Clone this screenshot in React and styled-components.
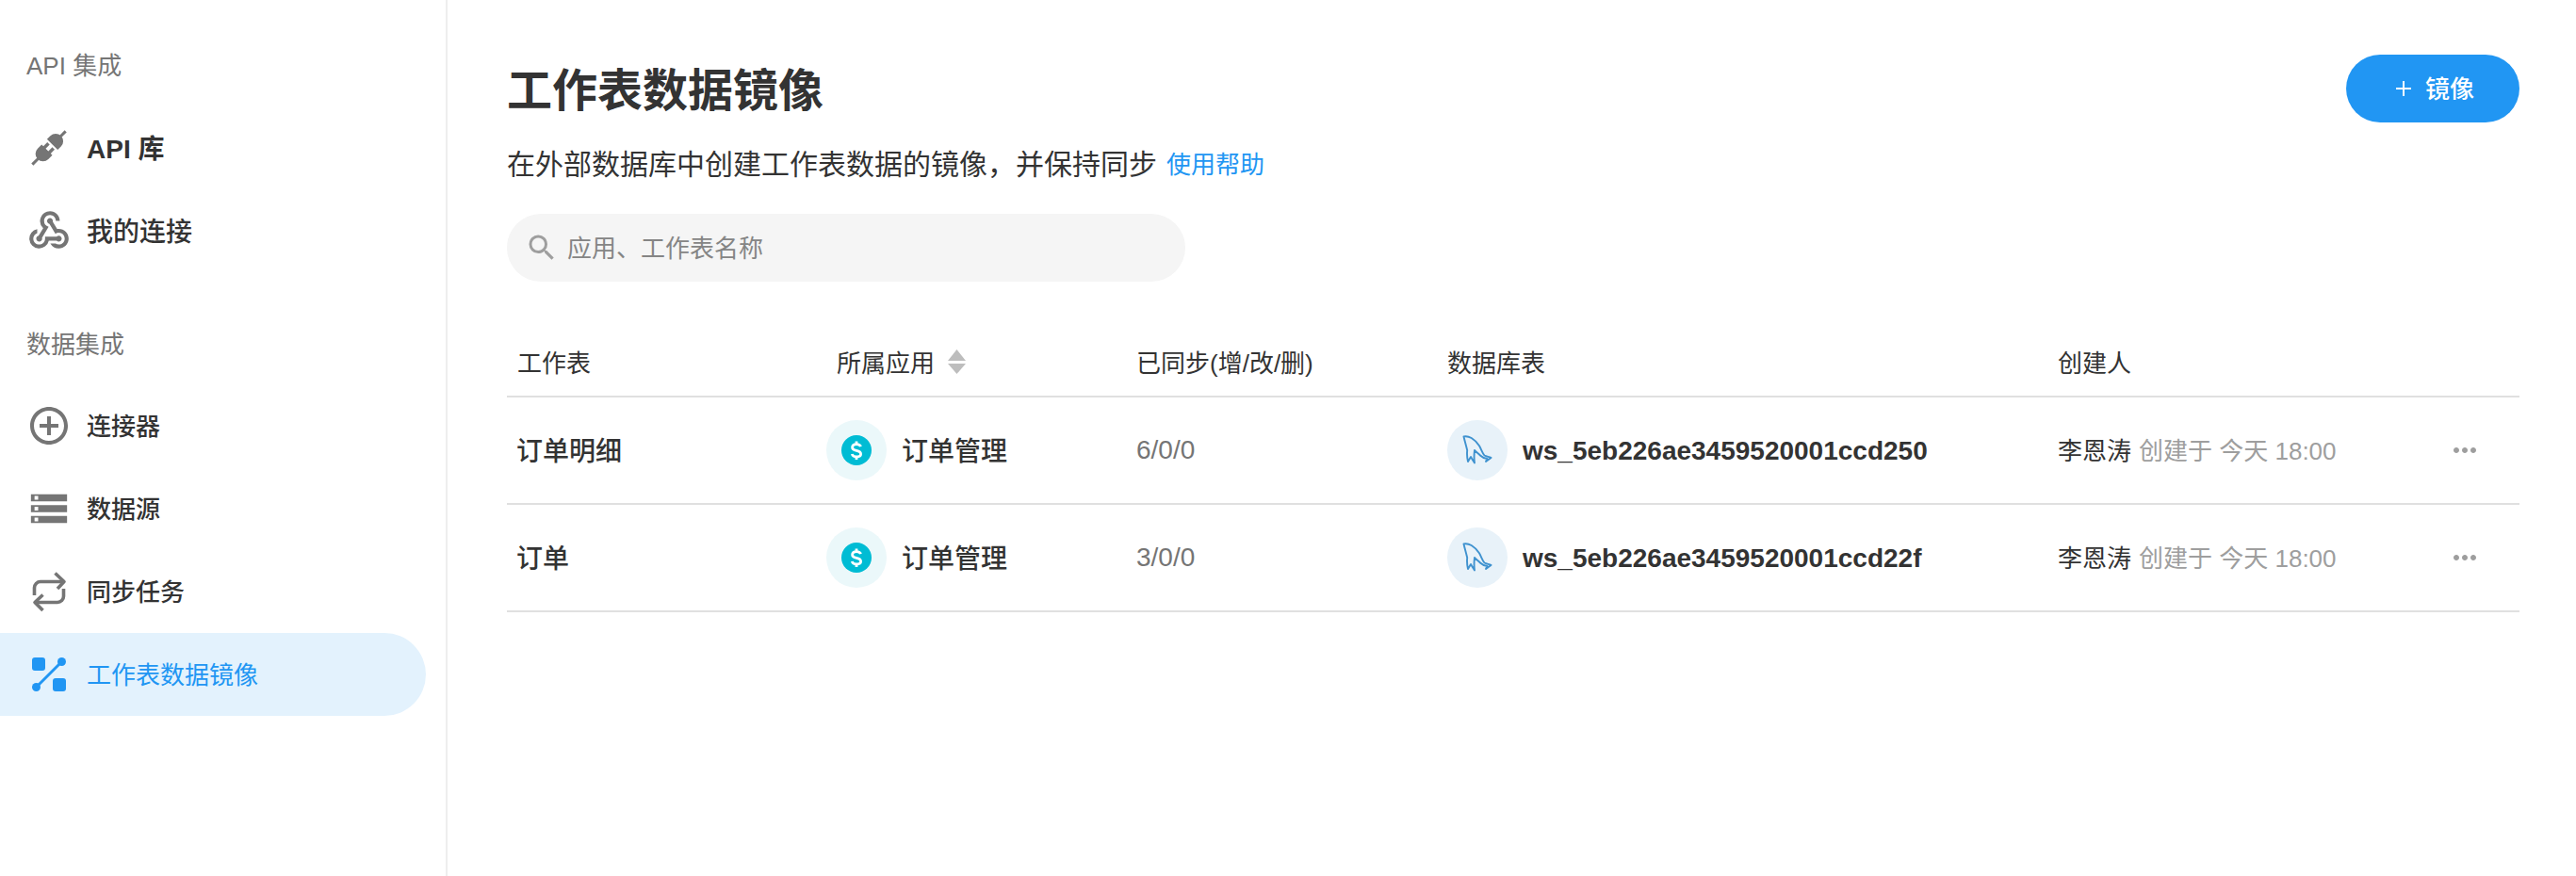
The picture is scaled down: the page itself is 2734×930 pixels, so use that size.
import styled, { createGlobalStyle } from 'styled-components'
import { MdAddCircleOutline, MdMoreHoriz, MdSearch, MdStorage, MdWebhook } from 'react-icons/md'

const colors = {
  blue: '#2196f3',
  border: '#e0e0e0',
  grey: '#757575',
  light: '#9e9e9e',
  text: '#333333',
}

const tableColumns = '339px 329px 330px 648px 1fr'

const GlobalStyle = createGlobalStyle`
  * {
    box-sizing: border-box;
  }

  html, body {
    background: #fff;
    margin: 0;
  }

  body {
    color: ${colors.text};
    font-family: "Liberation Sans", "Noto Sans CJK SC", sans-serif;
  }
`

const Page = styled.div`
  display: flex;
  height: 930px;
  overflow: hidden;
`

const Sidebar = styled.aside`
  border-right: 2px solid #eeeeee;
  flex: 0 0 475px;
  padding: 48px 21px 0 0;
`

const GroupLabel = styled.div`
  color: ${colors.grey};
  font-size: 26px;
  height: 44px;
  line-height: 44px;
  margin-bottom: ${p => (p.$first ? 21 : 20)}px;
  margin-top: ${p => (p.$first ? 0 : 55)}px;
  padding-left: 28px;
`

const NavItem = styled.div`
  align-items: center;
  background: ${p => (p.$active ? '#e3f2fd' : 'transparent')};
  border-radius: 0 44px 44px 0;
  color: ${p => (p.$active ? colors.blue : colors.text)};
  display: flex;
  font-size: ${p => (p.$large ? 28 : 26)}px;
  font-weight: ${p => (p.$active ? 400 : 500)};
  gap: 16px;
  height: 88px;
  padding-left: 28px;

  svg {
    color: ${p => (p.$active ? colors.blue : colors.grey)};
    flex: none;
  }
`

const NavText = styled.span`
  font-weight: ${p => (p.$bold ? 700 : 'inherit')};
  padding-bottom: 3px;
`

const IconSlot = styled.span`
  align-items: center;
  display: flex;
  flex: none;
  height: 48px;
  justify-content: center;
  width: 48px;
`

const Main = styled.main`
  flex: 1;
  padding: 58px 60px 0 63px;
`

const Header = styled.div`
  align-items: flex-start;
  display: flex;
  justify-content: space-between;
`

const TitleBlock = styled.div`
  padding-top: 3px;
`

const Title = styled.h1`
  font-size: 48px;
  font-weight: 700;
  line-height: 72px;
  margin: 0;
`

const Description = styled.p`
  align-items: center;
  display: flex;
  font-size: 30px;
  gap: 10px;
  line-height: 44px;
  margin: 20px 0 0;
`

const HelpLink = styled.a`
  color: ${colors.blue};
  font-size: 26px;
`

const AddButton = styled.button`
  align-items: center;
  background: ${colors.blue};
  border: 0;
  border-radius: 36px;
  color: #fff;
  display: flex;
  font-family: inherit;
  font-size: 26px;
  font-weight: 500;
  gap: 15px;
  height: 72px;
  justify-content: center;
  padding: 0 0 3px 5px;
  width: 184px;

  svg {
    margin-top: 3px;
  }
`

const Search = styled.div`
  align-items: center;
  background: #f5f5f5;
  border-radius: 36px;
  color: #858585;
  display: flex;
  font-size: 26px;
  gap: 9px;
  height: 72px;
  margin-top: 30px;
  padding-left: 19px;
  width: 720px;

  svg {
    color: ${colors.light};
  }
`

const SearchText = styled.span`
  padding-bottom: 3px;
`

const HeadRow = styled.div`
  align-items: center;
  border-bottom: 2px solid ${colors.border};
  display: grid;
  font-size: 26px;
  grid-template-columns: ${tableColumns};
  height: 72px;
  margin-top: 51px;
  padding-bottom: 3px;
`

const Row = styled.div`
  align-items: center;
  border-bottom: 2px solid ${colors.border};
  display: grid;
  grid-template-columns: ${tableColumns};
  height: 114px;
`

const HeadCell = styled.div`
  align-items: center;
  display: flex;
  gap: 14px;
  padding-left: ${p => p.$inset || 0}px;
`

const SheetName = styled.div`
  font-size: 28px;
  font-weight: 500;
  padding: 0 0 2px 10px;
`

const IconCell = styled.div`
  align-items: center;
  display: flex;
  gap: 16px;
`

const IconCircle = styled.div`
  align-items: center;
  background: ${p => p.$bg};
  border-radius: 50%;
  color: ${p => p.$color};
  display: flex;
  height: 64px;
  justify-content: center;
  width: 64px;
`

const AppName = styled.span`
  font-size: 28px;
  font-weight: 500;
  padding-bottom: 2px;
`

const DbName = styled.span`
  font-size: 28px;
  font-weight: 700;
  padding-top: 2px;
`

const SyncCount = styled.div`
  color: ${colors.grey};
  font-size: 28px;
`

const Creator = styled.div`
  align-items: center;
  display: flex;
  font-size: 26px;
  justify-content: space-between;
  padding-right: 40px;
`

const CreatorText = styled.div`
  padding-bottom: 3px;
`

const CreatedAt = styled.span`
  color: ${colors.light};
  margin-left: 8px;
`

const MoreIcon = styled(MdMoreHoriz)`
  color: ${colors.light};
  margin-bottom: 1px;
`

const PlugIcon = () => (
  <svg width='48' height='48' viewBox='0 0 48 48' fill='currentColor'>
    <g transform='rotate(45 24 24)'>
      <rect x='22.5' y='-1' width='3' height='8' />
      <path d='M16 19 V14 a8 8 0 0 1 16 0 V19 Z' />
      <path d='M16 27 H32 V33 a8 8 0 0 1 -16 0 Z' />
      <rect x='18.5' y='21' width='3.5' height='7' />
      <rect x='26' y='21' width='3.5' height='7' />
      <rect x='22.5' y='40' width='3' height='9' />
    </g>
  </svg>
)

const RepeatIcon = () => (
  <svg width='48' height='48' viewBox='0 0 48 48' fill='none' stroke='currentColor' strokeWidth='3.6'>
    <path d='M8.5 28 V20 a6.5 6.5 0 0 1 6.5 -6.5 H40' />
    <path d='M30.5 4.5 L40 13.5 L33 21' strokeLinejoin='round' />
    <path d='M39.5 21 V29 a6.5 6.5 0 0 1 -6.5 6.5 H9' />
    <path d='M17.5 27.5 L9 35.5 L17.5 44' strokeLinejoin='round' />
  </svg>
)

const MirrorIcon = () => (
  <svg width='48' height='48' viewBox='0 0 48 48' fill='currentColor'>
    <rect x='6' y='6' width='14' height='14' rx='3' />
    <rect x='28' y='28' width='14' height='14' rx='3' />
    <circle cx='37.5' cy='10.5' r='4.5' />
    <circle cx='10.5' cy='37.5' r='4.5' />
    <path d='M37.5 10.5 L10.5 37.5' stroke='currentColor' strokeWidth='3' />
  </svg>
)

const PlusIcon = () => (
  <svg width='16' height='16' viewBox='0 0 16 16' stroke='currentColor' strokeWidth='2'>
    <path d='M8 0 V16 M0 8 H16' />
  </svg>
)

const CoinIcon = () => (
  <svg width='32' height='32' viewBox='0 0 32 32'>
    <circle cx='16' cy='16' r='16' fill='currentColor' />
    <path
      d='M20.5 12.2 C20 10.4 18.3 9.6 16 9.6 C13.5 9.6 11.6 10.9 11.6 13 C11.6 15.3 14 16 16 16.4 C18.4 16.9 20.6 17.7 20.6 20 C20.6 22 18.5 23 16 23 C13.5 23 11.8 22 11.3 20 M16 6.5 V9.6 M16 23 V26'
      fill='none'
      stroke='#fff'
      strokeWidth='2.8'
    />
  </svg>
)

const DolphinIcon = () => (
  <svg width='32' height='32' viewBox='0 0 32 32' fill='none' stroke='currentColor' strokeWidth='1.9' strokeLinejoin='round'>
    <path d='M1.5 1.5 C4 1 7.5 1.8 9.7 3 C13 5 16 8 18 11.3 C20 14.5 21 18.5 23.5 21.5 C25.5 22.5 28 23 30.5 24 L25 28 L26.5 25 C23.5 24.5 21 23.5 19 21.5 C17 19.5 15 18 13 16 C12.5 20 12.5 26 13 29.5 C11.5 27 10 25 9 23 L6 28 C5 24 4.8 20 5.2 16 C4 11 2.5 6 1.5 1.5 Z' />
  </svg>
)

const SortIcon = () => (
  <svg width='19' height='26' viewBox='0 0 19 26' fill='#bdbdbd'>
    <path d='M9.5 0 L19 12 H0 Z' />
    <path d='M9.5 26 L0 15 H19 Z' />
  </svg>
)

const rows = [
  { name: '订单明细', sync: '6/0/0', table: 'ws_5eb226ae3459520001ccd250' },
  { name: '订单', sync: '3/0/0', table: 'ws_5eb226ae3459520001ccd22f' },
]

const App = () => (
  <>
    <GlobalStyle />
    <Page>
      <Sidebar>
        <GroupLabel $first>API 集成</GroupLabel>
        <NavItem $large>
          <PlugIcon />
          <NavText $bold>API 库</NavText>
        </NavItem>
        <NavItem $large>
          <IconSlot>
            <MdWebhook size={50} />
          </IconSlot>
          <NavText>我的连接</NavText>
        </NavItem>
        <GroupLabel>数据集成</GroupLabel>
        <NavItem>
          <MdAddCircleOutline size={48} />
          <NavText>连接器</NavText>
        </NavItem>
        <NavItem>
          <IconSlot>
            <MdStorage size={46} />
          </IconSlot>
          <NavText>数据源</NavText>
        </NavItem>
        <NavItem>
          <RepeatIcon />
          <NavText>同步任务</NavText>
        </NavItem>
        <NavItem $active>
          <MirrorIcon />
          <NavText>工作表数据镜像</NavText>
        </NavItem>
      </Sidebar>
      <Main>
        <Header>
          <TitleBlock>
            <Title>工作表数据镜像</Title>
            <Description>
              在外部数据库中创建工作表数据的镜像，并保持同步
              <HelpLink>使用帮助</HelpLink>
            </Description>
          </TitleBlock>
          <AddButton>
            <PlusIcon />
            镜像
          </AddButton>
        </Header>
        <Search>
          <MdSearch size={36} />
          <SearchText>应用、工作表名称</SearchText>
        </Search>
        <HeadRow>
          <HeadCell $inset={11}>工作表</HeadCell>
          <HeadCell $inset={11}>
            所属应用
            <SortIcon />
          </HeadCell>
          <HeadCell>已同步(增/改/删)</HeadCell>
          <HeadCell>数据库表</HeadCell>
          <HeadCell>创建人</HeadCell>
        </HeadRow>
        {rows.map(({ name, sync, table }) => (
          <Row key={table}>
            <SheetName>{name}</SheetName>
            <IconCell>
              <IconCircle $bg='#ebf8fa' $color='#00bcd4'>
                <CoinIcon />
              </IconCircle>
              <AppName>订单管理</AppName>
            </IconCell>
            <SyncCount>{sync}</SyncCount>
            <IconCell>
              <IconCircle $bg='#e8f2f9' $color='#3f92cf'>
                <DolphinIcon />
              </IconCircle>
              <DbName>{table}</DbName>
            </IconCell>
            <Creator>
              <CreatorText>
                李恩涛
                <CreatedAt>创建于 今天 18:00</CreatedAt>
              </CreatorText>
              <MoreIcon size={36} />
            </Creator>
          </Row>
        ))}
      </Main>
    </Page>
  </>
)

export default App
